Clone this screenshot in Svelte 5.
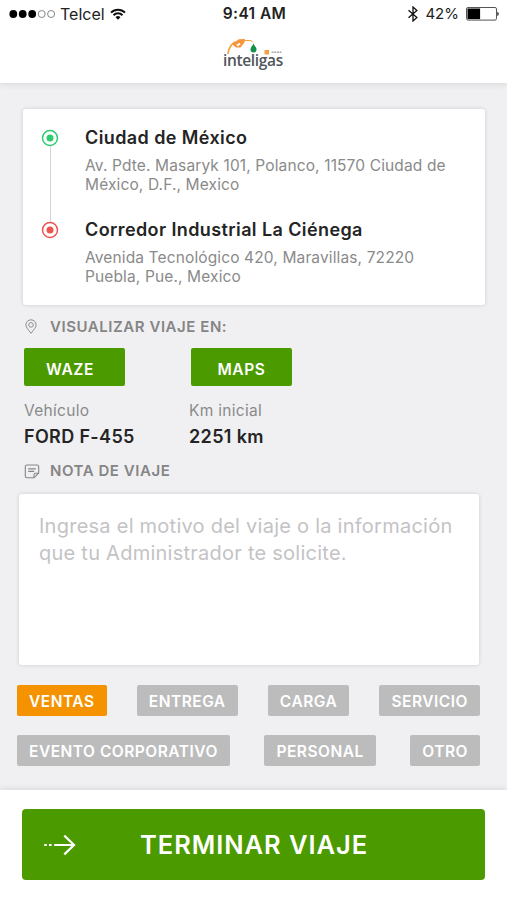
<script>
  let stops = [
    {
      name: "Ciudad de México",
      lines: ["Av. Pdte. Masaryk 101, Polanco, 11570 Ciudad de", "México, D.F., Mexico"],
      color: "#2ecc71"
    },
    {
      name: "Corredor Industrial La Ciénega",
      lines: ["Avenida Tecnológico 420, Maravillas, 72220", "Puebla, Pue., Mexico"],
      color: "#ef5350"
    }
  ];

  let reasons = [
    ["VENTAS", "ENTREGA", "CARGA", "SERVICIO"],
    ["EVENTO CORPORATIVO", "PERSONAL", "OTRO"]
  ];

  let selected = "VENTAS";
  let note = "";

  const placeholder =
    "Ingresa el motivo del viaje o la información\nque tu Administrador te solicite.";
</script>

<div class="screen">
  <header>
    <div class="status">
      <div class="carrier">
        <svg width="47" height="10" viewBox="0 0 47 10">
          <g fill="#000">
            <circle cx="4.3" cy="5" r="3.9" />
            <circle cx="13.7" cy="5" r="3.9" />
            <circle cx="23.2" cy="5" r="3.9" />
          </g>
          <g fill="none" stroke="#777" stroke-width="0.9">
            <circle cx="32.7" cy="5" r="3.5" />
            <circle cx="42.1" cy="5" r="3.5" />
          </g>
        </svg>
        <span>Telcel</span>
        <svg class="wifi" width="16" height="12" viewBox="0 0 16 12">
          <g fill="none" stroke="#111" stroke-width="2">
            <path d="M1 4.6a10 10 0 0 1 14 0" />
            <path d="M3.5 7.2a6.4 6.4 0 0 1 9 0" />
          </g>
          <path d="M5.5 9.2a3.6 3.6 0 0 1 5 0L8 11.8z" fill="#111" />
        </svg>
      </div>
      <div class="time">9:41 AM</div>
      <div class="power">
        <svg width="12" height="16" viewBox="0 0 12 16">
          <path
            d="M1.5 4.2l8.4 7.4L6 15V1l3.9 3.4-8.4 7.4"
            fill="none"
            stroke="#111"
            stroke-width="1.3" />
        </svg>
        <span>42%</span>
        <svg class="battery" width="34" height="14" viewBox="0 0 34 14">
          <rect x="0.5" y="0.5" width="30" height="12.6" rx="1.5" fill="#fff" stroke="#555" />
          <rect x="1.5" y="1.5" width="12.6" height="10.6" fill="#000" />
          <path d="M31.3 4.7a2.4 2.4 0 0 1 0 4.4z" fill="#222" />
        </svg>
      </div>
    </div>
    <div class="logo">
      <svg width="62" height="17" viewBox="0 0 62 17">
        <path d="M6 16C6.500 10 9 6.500 13 4" fill="none" stroke="#f7a13d" stroke-width="1.6" />
        <path d="M11 5L17 1.200 23 1 22.500 4.500 18.500 9.500 14 9.500 11 7z" fill="#f7953a" />
        <path d="M14.300 6.800l3.500-2 .7 1.500-2.800 2.200z" fill="#fff" />
        <path d="M22 2.500h6q2 0 2.800 1.700" fill="none" stroke="#f7a13d" stroke-width="1" />
        <path d="M31.500 5.500C32.500 8 34.500 9.200 34.500 11.500a3 3 0 0 1-6 0C28.500 9.200 30.500 8 31.500 5.500z" fill="#15904a" />
        <rect x="42.500" y="12" width="4.500" height="4.500" fill="#f5a03c" />
        <path d="M49.500 14.200h10" stroke="#a8a8a8" stroke-width="1.600" stroke-dasharray="2 .7" />
      </svg>
      <span>inteligas</span>
    </div>
  </header>

  <main>
    <section class="route">
      {#each stops as stop}
        <div class="stop">
          <svg width="18" height="18" viewBox="0 0 18 18">
            <circle cx="9" cy="9" r="7.500" fill="none" stroke={stop.color} stroke-width="1.500" />
            <circle cx="9" cy="9" r="3.500" fill={stop.color} />
          </svg>
          <div>
            <h2>{stop.name}</h2>
            <p>{stop.lines[0]}<br />{stop.lines[1]}</p>
          </div>
        </div>
      {/each}
    </section>

    <h3 class="open">
      <svg width="15" height="16" viewBox="0 0 15 16">
        <g fill="none" stroke="#8e8e8e" stroke-width="1">
          <path d="M7 14.300C4 10.500 1.900 8.200 1.900 5.900a5.100 5.100 0 0 1 10.200 0C12.100 8.200 10 10.500 7 14.300z" />
          <circle cx="7" cy="5.900" r="2.300" />
        </g>
      </svg>
      VISUALIZAR VIAJE EN:
    </h3>
    <div class="apps">
      <button class="waze">WAZE</button>
      <button>MAPS</button>
    </div>

    <dl>
      <div>
        <dt>Vehículo</dt>
        <dd>FORD F-455</dd>
      </div>
      <div>
        <dt>Km inicial</dt>
        <dd>2251 km</dd>
      </div>
    </dl>

    <h3 class="note">
      <svg width="16" height="15" viewBox="0 0 16 15">
        <g fill="none" stroke="#858585" stroke-width="1.100">
          <path d="M3 1h10q1.700 0 1.700 1.700V9L10 13.800H3q-1.700 0-1.700-1.700V2.700Q1.300 1 3 1z" />
          <path d="M10 13.500V10.700Q10 9.300 11.400 9.300h3" />
          <path d="M4.200 4.900h7.600M4.200 7.400h6" />
        </g>
      </svg>
      NOTA DE VIAJE
    </h3>
    <textarea {placeholder} bind:value={note}></textarea>

    <div class="reasons">
      {#each reasons as row}
        <div class="row">
          {#each row as reason}
            <button class:active={reason === selected} on:click={() => (selected = reason)}>
              {reason}
            </button>
          {/each}
        </div>
      {/each}
    </div>
  </main>

  <footer>
    <button>
      <svg width="34" height="22" viewBox="0 0 34 22">
        <g fill="none" stroke="#fff" stroke-width="2.200">
          <path d="M1.200 11h2.600M6 11h2.600M11.200 11h19.300" />
          <path d="M21.300 1.600L31 11l-9.700 9.400" />
        </g>
      </svg>
      <span>TERMINAR VIAJE</span>
    </button>
  </footer>
</div>

<style>
  :global(body) {
    background: #f0f0f2;
  }
  .screen {
    display: flex;
    flex-direction: column;
    height: 900px;
    overflow: hidden;
    background: #f0f0f2;
    font-family: Inter, "Liberation Sans", sans-serif;
    color: #242424;
  }
  h2,
  h3,
  p,
  dl,
  dd {
    margin: 0;
  }
  svg {
    display: block;
    flex: none;
  }
  button {
    border: 0;
    padding: 0;
    font-family: inherit;
    color: #fff;
    cursor: pointer;
  }
  header {
    height: 83px;
    background: #fff;
    box-shadow: 0 1px 7px rgba(0, 0, 0, 0.11);
  }
  .status {
    display: grid;
    grid-template-columns: 1fr auto 1fr;
    align-items: center;
    height: 27px;
    padding: 0 7px 0 9px;
    font-size: 16px;
    color: #222;
  }
  .carrier,
  .power {
    display: flex;
    align-items: center;
  }
  .carrier span {
    margin: 0 5px 0 4px;
  }
  .time {
    font-weight: 600;
    font-size: 15.500px;
    letter-spacing: 0.4px;
  }
  .power {
    justify-content: flex-end;
  }
  .power span {
    margin: 0 7px 0 6px;
    font-size: 15px;
  }
  .logo {
    width: 62px;
    margin: 11px auto 0;
    padding-right: 1px;
  }
  .logo span {
    display: block;
    margin: -4px 0 0 1px;
    font: 600 15.500px/18px "Open Sans", sans-serif;
    letter-spacing: -0.35px;
    color: #50565b;
  }
  main {
    flex: 1;
    display: flex;
    flex-direction: column;
    padding: 26px 22px 0 24px;
  }
  .route {
    box-sizing: border-box;
    height: 196px;
    margin-left: -1px;
    padding: 17px 0 0 18px;
    border-radius: 3px;
    background: #fff;
    box-shadow: 0 0 4px rgba(0, 0, 0, 0.14);
  }
  .stop {
    position: relative;
    display: flex;
    gap: 26px;
    height: 92px;
  }
  .stop svg {
    margin-top: 3px;
  }
  .stop:first-child::before {
    content: "";
    position: absolute;
    left: 9px;
    top: 20px;
    width: 1px;
    height: 76px;
    background: #d4d4d4;
  }
  h2 {
    font-size: 18px;
    line-height: 24px;
    font-weight: 600;
    letter-spacing: 0.4px;
  }
  p {
    margin-top: 6px;
    font-size: 15.500px;
    line-height: 19.300px;
    letter-spacing: 0.13px;
    color: #8a8a8a;
  }
  h3 {
    display: flex;
    align-items: center;
    gap: 11px;
    font-size: 15px;
    line-height: 20px;
    font-weight: 600;
    letter-spacing: 0.55px;
    color: #858585;
  }
  .open {
    margin-top: 12px;
  }
  .apps {
    display: flex;
    gap: 66px;
    margin-top: 11px;
  }
  .apps button {
    width: 101px;
    height: 38px;
    padding-top: 4px;
    border-radius: 2px;
    background: #4b9b00;
    font-size: 15.500px;
    font-weight: 600;
    letter-spacing: 0.6px;
  }
  .apps .waze {
    padding-right: 9px;
  }
  dl {
    display: grid;
    grid-template-columns: 165px 1fr;
    margin-top: 15px;
  }
  dt {
    font-size: 15.500px;
    line-height: 20px;
    letter-spacing: 0.3px;
    color: #8a8a8a;
  }
  dd {
    margin-top: 4px;
    font-size: 18px;
    line-height: 24px;
    font-weight: 600;
    letter-spacing: 0.35px;
  }
  .note {
    margin-top: 12px;
    gap: 10px;
  }
  textarea {
    box-sizing: border-box;
    width: 460px;
    height: 171px;
    margin: 13px 0 0 -5px;
    padding: 19px 20px;
    border: 0;
    border-radius: 3px;
    background: #fff;
    box-shadow: 0 0 4px rgba(0, 0, 0, 0.14);
    font-family: inherit;
    font-size: 20px;
    line-height: 27px;
    letter-spacing: 0.25px;
    resize: none;
    outline: none;
  }
  textarea::placeholder {
    color: #c3c3c5;
  }
  .reasons {
    display: flex;
    flex-direction: column;
    gap: 19px;
    margin: 20px 5px 0 -7px;
  }
  .row {
    display: flex;
    justify-content: space-between;
  }
  .row button {
    height: 31px;
    padding: 1px 12px 0;
    border-radius: 2px;
    background: #bcbcbc;
    font-size: 15.500px;
    font-weight: 600;
    letter-spacing: 0.5px;
    white-space: nowrap;
  }
  .row .active {
    background: #f59200;
  }
  footer {
    box-sizing: border-box;
    height: 110px;
    padding: 19px 22px 0;
    background: #fff;
    box-shadow: 0 -1px 6px rgba(0, 0, 0, 0.1);
  }
  footer button {
    display: flex;
    align-items: center;
    width: 463px;
    height: 71px;
    padding-left: 21px;
    border-radius: 4px;
    background: #4b9b00;
    font-size: 25.500px;
    font-weight: 600;
    letter-spacing: 0.95px;
  }
  footer span {
    margin-left: 63px;
  }
</style>
